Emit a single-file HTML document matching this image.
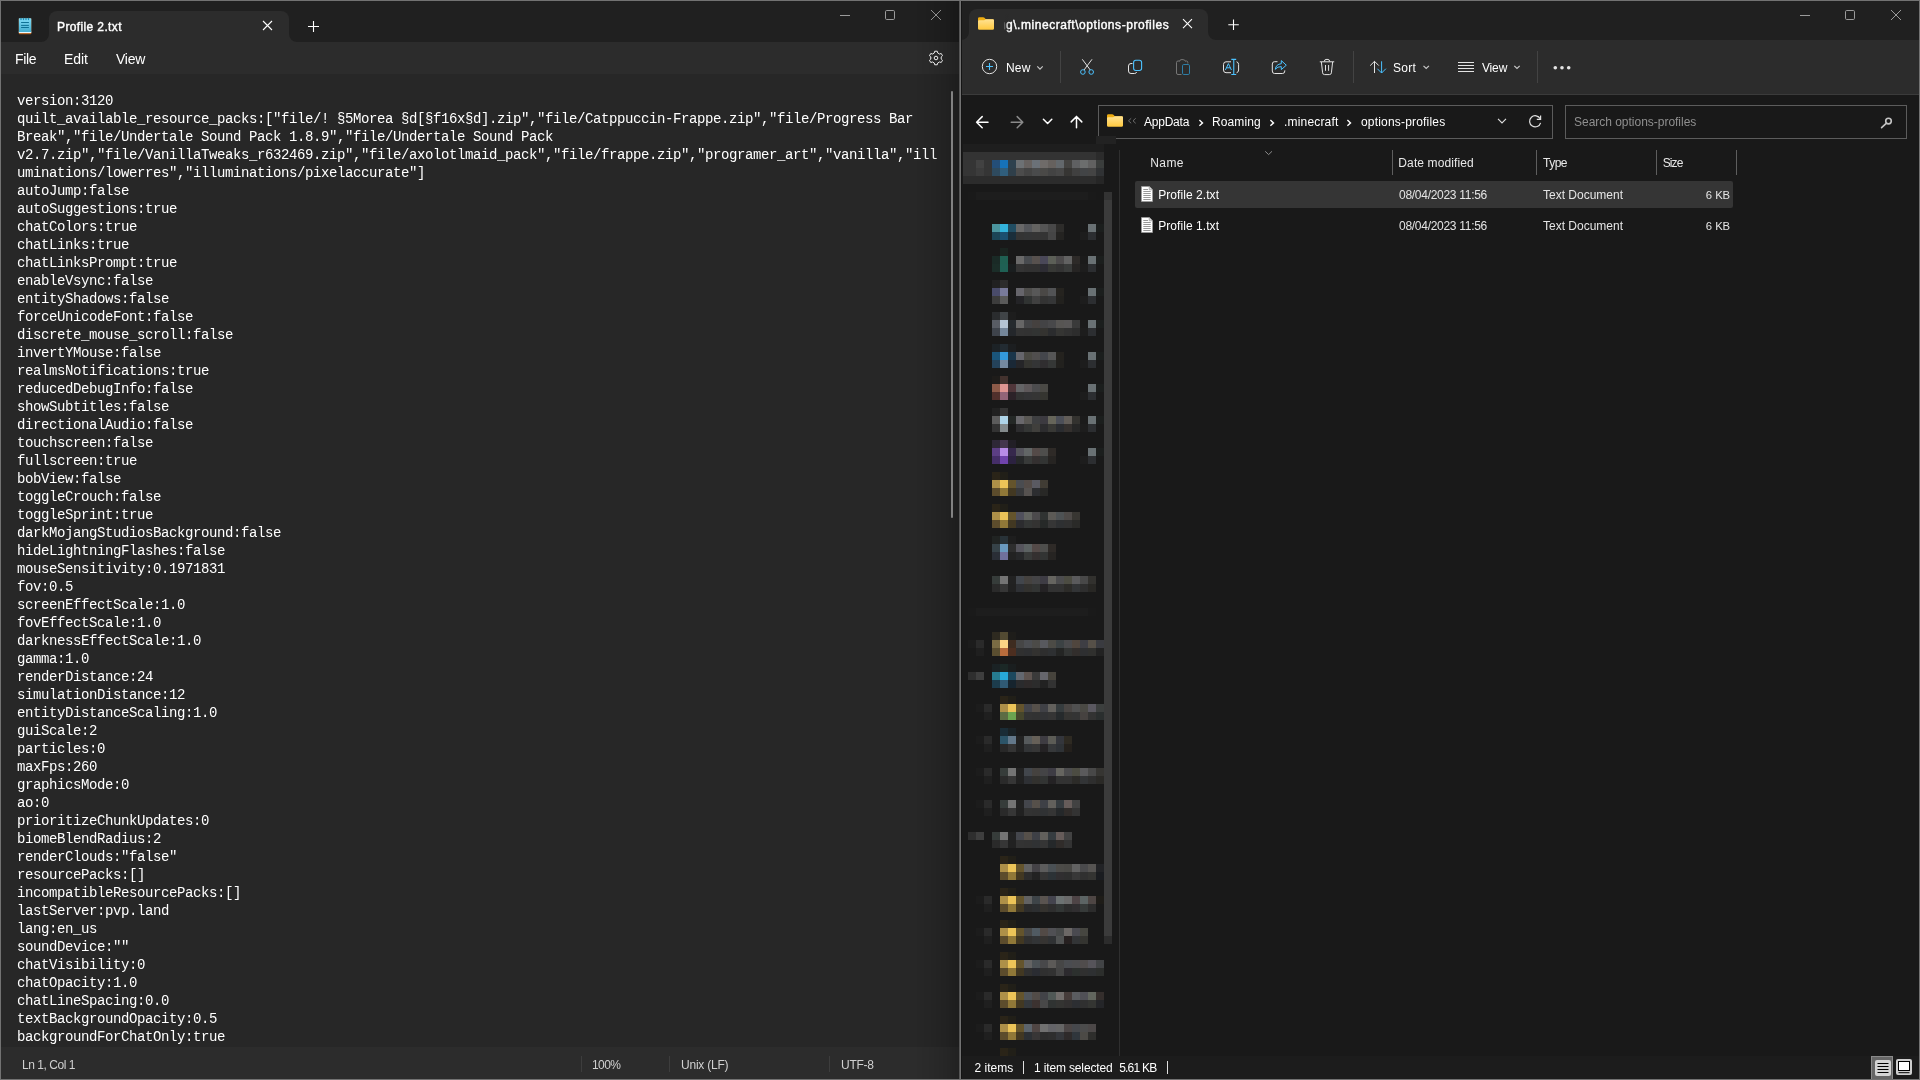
<!DOCTYPE html>
<html lang="en"><head><meta charset="utf-8"><title>Desktop</title>
<style>
html,body{margin:0;padding:0;background:#191919;}
body{width:1920px;height:1080px;position:relative;overflow:hidden;font-family:"Liberation Sans",sans-serif;color:#fff;}
.a{position:absolute;}
.t{position:absolute;white-space:pre;line-height:20px;height:20px;font-family:"Liberation Sans",sans-serif;}
.m{position:absolute;left:17px;white-space:pre;font-family:"Liberation Mono",monospace;font-size:14px;letter-spacing:-0.4014px;line-height:18px;height:18px;color:#fff;}
.g{will-change:transform;}
svg{position:absolute;overflow:visible;}
</style></head><body>
<div class="a" id="np" style="left:0;top:0;width:960px;height:1080px;background:#727272"></div>
<div class="a" style="left:1px;top:1px;width:958px;height:41px;background:#202020"></div>
<div class="a" style="left:1px;top:42px;width:958px;height:32px;background:#2c2c2c"></div>
<div class="a" style="left:1px;top:74px;width:958px;height:973px;background:#272727"></div>
<div class="a" style="left:1px;top:1047px;width:958px;height:32px;background:#2c2c2c"></div>
<div class="a" style="left:49px;top:11px;width:240px;height:31px;background:#2c2c2c;border-radius:8px 8px 0 0"></div>
<svg style="left:0;top:0" width="1920" height="1080"><path d="M41,42 A8,8 0 0 0 49,34 L49,42Z M297,42 A8,8 0 0 1 289,34 L289,42Z" fill="#2c2c2c"/></svg>
<svg style="left:0;top:0" width="1920" height="1080">
<defs><linearGradient id="npg" x1="0" y1="0" x2="0" y2="1"><stop offset="0" stop-color="#82ddf8"/><stop offset="1" stop-color="#45aed0"/></linearGradient></defs>
<rect x="18.8" y="18.2" width="12.5" height="16" rx="0.8" fill="#b45a16"/>
<rect x="18.8" y="31.4" width="12.5" height="1.7" fill="#eaf7fc"/>
<rect x="18.8" y="18.2" width="12.5" height="13.9" rx="0.6" fill="url(#npg)"/>
<path d="M21,18.5v1.1M23.5,18.5v1.1M26,18.5v1.1M28.5,18.5v1.1" stroke="#1d8cb4" stroke-width="1.3" stroke-linecap="round"/>
<path d="M21.1,22.5h7.8M21.1,25.4h7.8M21.1,27.5h7.8" stroke="#05688c" stroke-width="0.9"/>
</svg>
<span class="t g" style="left:56.50px;top:16.84px;font-size:12px;letter-spacing:0.375px;-webkit-text-stroke:0.4px #fff;">Profile 2.txt</span>
<svg style="left:0;top:0" width="1920" height="1080"><path d="M263,21 L272,30 M272,21 L263,30" stroke="#fff" stroke-width="1.1" fill="none"/><path d="M308,26.5 H319 M313.5,21 V32" stroke="#fff" stroke-width="1.1" fill="none"/><path d="M840,15.5 H850" stroke="#9b9b9b" stroke-width="1"/><rect x="885.5" y="10.5" width="9" height="9" rx="1.2" fill="none" stroke="#9b9b9b" stroke-width="1"/><path d="M931,10 L941,20 M941,10 L931,20" stroke="#9b9b9b" stroke-width="1" fill="none"/></svg>
<span class="t g" style="left:15.00px;top:49.15px;font-size:14px;letter-spacing:-0.333px;">File</span>
<span class="t g" style="left:63.60px;top:49.15px;font-size:14px;letter-spacing:-0.117px;">Edit</span>
<span class="t g" style="left:116.25px;top:49.15px;font-size:14px;letter-spacing:-0.267px;">View</span>
<svg class="a" style="left:0;top:0" width="1920" height="1080"><path d="M934.31,52.98 L934.71,51.22 L937.29,51.22 L937.69,52.98 L939.50,54.02 L941.22,53.49 L942.52,55.73 L941.20,56.95 L941.20,59.05 L942.52,60.27 L941.22,62.51 L939.50,61.98 L937.69,63.02 L937.29,64.78 L934.71,64.78 L934.31,63.02 L932.50,61.98 L930.78,62.51 L929.48,60.27 L930.80,59.05 L930.80,56.95 L929.48,55.73 L930.78,53.49 L932.50,54.02Z" fill="none" stroke="#fff" stroke-width="1" stroke-linejoin="round"/><circle cx="936" cy="58" r="1.8" fill="none" stroke="#fff" stroke-width="1"/></svg>
<div class="m" style="top:92px">version:3120</div>
<div class="m" style="top:110px">quilt_available_resource_packs:["file/! §5Morea §d[§f16x§d].zip","file/Catppuccin-Frappe.zip","file/Progress Bar</div>
<div class="m" style="top:128px">Break","file/Undertale Sound Pack 1.8.9","file/Undertale Sound Pack</div>
<div class="m" style="top:146px">v2.7.zip","file/VanillaTweaks_r632469.zip","file/axolotlmaid_pack","file/frappe.zip","programer_art","vanilla","ill</div>
<div class="m" style="top:164px">uminations/lowerres","illuminations/pixelaccurate"]</div>
<div class="m" style="top:182px">autoJump:false</div>
<div class="m" style="top:200px">autoSuggestions:true</div>
<div class="m" style="top:218px">chatColors:true</div>
<div class="m" style="top:236px">chatLinks:true</div>
<div class="m" style="top:254px">chatLinksPrompt:true</div>
<div class="m" style="top:272px">enableVsync:false</div>
<div class="m" style="top:290px">entityShadows:false</div>
<div class="m" style="top:308px">forceUnicodeFont:false</div>
<div class="m" style="top:326px">discrete_mouse_scroll:false</div>
<div class="m" style="top:344px">invertYMouse:false</div>
<div class="m" style="top:362px">realmsNotifications:true</div>
<div class="m" style="top:380px">reducedDebugInfo:false</div>
<div class="m" style="top:398px">showSubtitles:false</div>
<div class="m" style="top:416px">directionalAudio:false</div>
<div class="m" style="top:434px">touchscreen:false</div>
<div class="m" style="top:452px">fullscreen:true</div>
<div class="m" style="top:470px">bobView:false</div>
<div class="m" style="top:488px">toggleCrouch:false</div>
<div class="m" style="top:506px">toggleSprint:true</div>
<div class="m" style="top:524px">darkMojangStudiosBackground:false</div>
<div class="m" style="top:542px">hideLightningFlashes:false</div>
<div class="m" style="top:560px">mouseSensitivity:0.1971831</div>
<div class="m" style="top:578px">fov:0.5</div>
<div class="m" style="top:596px">screenEffectScale:1.0</div>
<div class="m" style="top:614px">fovEffectScale:1.0</div>
<div class="m" style="top:632px">darknessEffectScale:1.0</div>
<div class="m" style="top:650px">gamma:1.0</div>
<div class="m" style="top:668px">renderDistance:24</div>
<div class="m" style="top:686px">simulationDistance:12</div>
<div class="m" style="top:704px">entityDistanceScaling:1.0</div>
<div class="m" style="top:722px">guiScale:2</div>
<div class="m" style="top:740px">particles:0</div>
<div class="m" style="top:758px">maxFps:260</div>
<div class="m" style="top:776px">graphicsMode:0</div>
<div class="m" style="top:794px">ao:0</div>
<div class="m" style="top:812px">prioritizeChunkUpdates:0</div>
<div class="m" style="top:830px">biomeBlendRadius:2</div>
<div class="m" style="top:848px">renderClouds:"false"</div>
<div class="m" style="top:866px">resourcePacks:[]</div>
<div class="m" style="top:884px">incompatibleResourcePacks:[]</div>
<div class="m" style="top:902px">lastServer:pvp.land</div>
<div class="m" style="top:920px">lang:en_us</div>
<div class="m" style="top:938px">soundDevice:""</div>
<div class="m" style="top:956px">chatVisibility:0</div>
<div class="m" style="top:974px">chatOpacity:1.0</div>
<div class="m" style="top:992px">chatLineSpacing:0.0</div>
<div class="m" style="top:1010px">textBackgroundOpacity:0.5</div>
<div class="m" style="top:1028px">backgroundForChatOnly:true</div>
<div class="a" style="left:951px;top:91px;width:2px;height:427px;background:#9f9f9f;border-radius:1px"></div>
<span class="t g" style="left:21.50px;top:1054.59px;font-size:12px;color:#d0d0d0;letter-spacing:-0.450px;">Ln 1, Col 1</span>
<span class="t g" style="left:592.25px;top:1054.59px;font-size:12px;color:#d0d0d0;letter-spacing:-0.583px;">100%</span>
<span class="t g" style="left:680.50px;top:1054.59px;font-size:12px;color:#d0d0d0;letter-spacing:-0.219px;">Unix (LF)</span>
<span class="t g" style="left:840.50px;top:1054.59px;font-size:12px;color:#d0d0d0;letter-spacing:-0.250px;">UTF-8</span>
<div class="a" style="left:916px;top:1px;width:43px;height:1078px;background:linear-gradient(90deg,rgba(0,0,0,0) 0%,rgba(0,0,0,0.05) 35%,rgba(0,0,0,0.13) 70%,rgba(0,0,0,0.24) 100%)"></div>
<div class="a" style="left:959px;top:1px;width:1px;height:1078px;background:#555"></div>
<div class="a" style="left:581px;top:1056px;width:1px;height:16px;background:#3d3d3d"></div>
<div class="a" style="left:669px;top:1056px;width:1px;height:16px;background:#3d3d3d"></div>
<div class="a" style="left:829px;top:1056px;width:1px;height:16px;background:#3d3d3d"></div>
<div class="a" id="ex" style="left:960px;top:0;width:960px;height:1080px;background:#727272"></div>
<div class="a" style="left:961px;top:1px;width:958px;height:39px;background:#202020"></div>
<div class="a" style="left:961px;top:1px;width:1px;height:1078px;background:#141414;z-index:3"></div>
<div class="a" style="left:961px;top:40px;width:958px;height:54px;background:#2c2c2c"></div>
<div class="a" style="left:961px;top:94px;width:958px;height:1px;background:#3b3b3b"></div>
<div class="a" style="left:961px;top:95px;width:958px;height:984px;background:#191919"></div>
<div class="a" style="left:961px;top:1056px;width:958px;height:23px;background:#1c1c1c"></div>
<div class="a" style="left:969px;top:9px;width:239px;height:31px;background:#2c2c2c;border-radius:8px 8px 0 0"></div>
<svg style="left:0;top:0" width="1920" height="1080"><path d="M961,40 A8,8 0 0 0 969,32 L969,40Z M1216,40 A8,8 0 0 1 1208,32 L1208,40Z" fill="#2c2c2c"/></svg>
<svg style="left:978px;top:17px" width="16" height="13" viewBox="0 0 16 13"><defs><linearGradient id="fg1" x1="0" y1="0" x2="0" y2="1"><stop offset="0" stop-color="#ffe394"/><stop offset="1" stop-color="#ffc83d"/></linearGradient></defs><path d="M0,1.6 Q0,0.2 1.4,0.2 H5.2 Q6,0.2 6.5,0.8 L7.8,2.2 H14.6 Q16,2.2 16,3.6 V11 H0Z" fill="#efad10"/><path d="M0,4.6 Q0,3.3 1.3,3.3 H5.5 Q6.3,3.3 6.9,2.8 L7.8,2.2 H14.7 Q16,2.2 16,3.5 V11.4 Q16,12.8 14.6,12.8 H1.4 Q0,12.8 0,11.4Z" fill="url(#fg1)"/></svg>
<span class="t g" style="left:998.65px;top:14.59px;font-size:12px;letter-spacing:0.000px;-webkit-text-stroke:0.4px #fff;">n</span>
<span class="t g" style="left:1005.70px;top:14.59px;font-size:12px;letter-spacing:0.546px;-webkit-text-stroke:0.4px #fff;">g\.minecraft\options-profiles</span>
<div class="a" style="left:996px;top:14px;width:14px;height:20px;background:linear-gradient(90deg,#2c2c2c 55%,rgba(44,44,44,0.35) 70%,rgba(44,44,44,0) 100%)"></div>
<svg style="left:0;top:0" width="1920" height="1080"><path d="M1183,19.2 L1192,28.2 M1192,19.2 L1183,28.2" stroke="#fff" stroke-width="1.1" fill="none"/><path d="M1228.3,24.8 H1238.8 M1233.5,19.6 V30" stroke="#fff" stroke-width="1.1" fill="none"/><path d="M1800,15.5 H1810" stroke="#9b9b9b" stroke-width="1"/><rect x="1845.5" y="10.5" width="9" height="9" rx="1.2" fill="none" stroke="#9b9b9b" stroke-width="1"/><path d="M1891,10 L1901,20 M1901,10 L1891,20" stroke="#9b9b9b" stroke-width="1" fill="none"/><circle cx="989.5" cy="66.5" r="7.2" fill="none" stroke="#e4e4e4" stroke-width="1"/><path d="M986,66.5 H993 M989.5,63 V70" stroke="#4cc2ff" stroke-width="1.1" fill="none"/><path d="M1037.3,66.4 L1040,69.1 L1042.7,66.4" stroke="#c8c8c8" stroke-width="1.2" fill="none"/><path d="M1060.5,51 V83" stroke="#434343" stroke-width="1"/><path d="M1353.5,51 V83" stroke="#434343" stroke-width="1"/><path d="M1537.5,51 V83" stroke="#434343" stroke-width="1"/><path d="M1082.3,59.3 L1090.3,70 M1092,59.3 L1084,70" stroke="#e4e4e4" stroke-width="1" fill="none"/><circle cx="1082.9" cy="72" r="2.3" fill="none" stroke="#4cc2ff" stroke-width="1"/><circle cx="1091.2" cy="72" r="2.3" fill="none" stroke="#4cc2ff" stroke-width="1"/><path d="M1132.5,63.5 H1131 Q1128.5,63.5 1128.5,66 V71 Q1128.5,73.5 1131,73.5 H1134.5 Q1136.3,73.5 1136.6,72" stroke="#e4e4e4" stroke-width="1" fill="none"/><rect x="1133.6" y="60.3" width="8" height="10.2" rx="2.2" fill="none" stroke="#4cc2ff" stroke-width="1.1"/><path d="M1181.5,74.5 H1178 Q1176.5,74.5 1176.5,73 V62.5 Q1176.5,61 1178,61 H1179.5 M1185.5,61 H1186.5 Q1187.8,61 1187.8,62.5 V63.5" stroke="#767676" stroke-width="1" fill="none"/><path d="M1179.5,61.5 Q1179.5,59.5 1182,59.5 Q1185.5,59.5 1185.5,61.5" stroke="#767676" stroke-width="1" fill="none"/><rect x="1182.5" y="64.5" width="7" height="10" rx="1.3" fill="none" stroke="#2e7ea6" stroke-width="1"/><path d="M1231,61.8 H1226 Q1223.5,61.8 1223.5,64.5 V70 Q1223.5,72.7 1226,72.7 H1231 M1236.5,61.8 H1236.7 Q1238.6,62.3 1238.6,64.5 V70 Q1238.6,72.2 1236.7,72.7 H1236.5" stroke="#e4e4e4" stroke-width="1" fill="none"/><path d="M1231.3,59.4 H1236.2 M1231.3,74.5 H1236.2 M1233.75,59.4 V74.5" stroke="#4cc2ff" stroke-width="1.1" fill="none"/><path d="M1225.4,70 L1228.4,63.6 L1231.4,70 M1226.5,67.8 H1230.3" stroke="#4cc2ff" stroke-width="1" fill="none"/><path d="M1277.5,61.7 H1274.5 Q1272.3,61.7 1272.3,64 V71 Q1272.3,73.5 1274.5,73.5 H1282.5 Q1284.8,73.5 1284.8,71 V70.4" stroke="#e4e4e4" stroke-width="1" fill="none"/><path d="M1275.3,69.3 Q1276,64.2 1281.3,63.7 V60.6 L1286.3,65.2 L1281.3,69.6 V66.6 Q1277.6,66.4 1275.3,69.3Z" stroke="#4cc2ff" stroke-width="1" fill="none" stroke-linejoin="round"/><path d="M1319.8,61.8 H1334.2 M1324.2,61.5 Q1324.2,59.3 1327,59.3 Q1329.8,59.3 1329.8,61.5 M1321.4,62 L1322.6,72.8 Q1322.8,74.6 1324.6,74.6 H1329.4 Q1331.2,74.6 1331.4,72.8 L1332.6,62 M1325.5,65 V70.8 M1328.6,65 V70.8" stroke="#e4e4e4" stroke-width="1" fill="none"/><path d="M1374.5,61.3 V73 M1370.2,65.6 L1374.5,61.3 L1378.8,65.6" stroke="#e4e4e4" stroke-width="1" fill="none"/><path d="M1381.6,61.3 V73 M1377.3,68.7 L1381.6,73 L1385.9,68.7" stroke="#4cc2ff" stroke-width="1" fill="none"/><path d="M1423.5,65.8 L1426.2,68.5 L1428.9,65.8" stroke="#c8c8c8" stroke-width="1.2" fill="none"/><path d="M1458,62.5 H1474 M1458,65.5 H1474 M1458,68.5 H1474 M1458,71.5 H1474" stroke="#e4e4e4" stroke-width="1" fill="none"/><path d="M1514.3,65.8 L1517,68.5 L1519.7,65.8" stroke="#c8c8c8" stroke-width="1.2" fill="none"/><circle cx="1555.3" cy="67.8" r="1.8" fill="#e4e4e4"/><circle cx="1562" cy="67.8" r="1.8" fill="#e4e4e4"/><circle cx="1568.7" cy="67.8" r="1.8" fill="#e4e4e4"/><path d="M976.6,122.2 H988 M982.2,116.6 L976.6,122.2 L982.2,127.8" stroke="#fff" stroke-width="1.5" fill="none" stroke-linejoin="round" stroke-linecap="round"/><path d="M1011.2,122.2 H1022.8 M1017.2,116.6 L1022.8,122.2 L1017.2,127.8" stroke="#8a8a8a" stroke-width="1.5" fill="none" stroke-linejoin="round" stroke-linecap="round"/><path d="M1043.4,119.2 L1047.6,123.5 L1051.8,119.2" stroke="#fff" stroke-width="1.5" fill="none" stroke-linejoin="round" stroke-linecap="round"/><path d="M1076.5,116.5 V127.8 M1071.2,121.9 L1076.5,116.5 L1081.8,121.9" stroke="#fff" stroke-width="1.5" fill="none" stroke-linejoin="round" stroke-linecap="round"/><path d="M1128.3,118.3 L1131,120.8 L1128.3,123.3 M1132.8,118.3 L1135.5,120.8 L1132.8,123.3" stroke="#777" stroke-width="0.9" fill="none" transform="translate(2264,0) scale(-1,1)"/><path d="M1199.4,120.1 L1202.5,122.9 L1199.4,125.7" stroke="#fff" stroke-width="1.4" fill="none"/><path d="M1270.4,120.1 L1273.5,122.9 L1270.4,125.7" stroke="#fff" stroke-width="1.4" fill="none"/><path d="M1347.4,120.1 L1350.5,122.9 L1347.4,125.7" stroke="#fff" stroke-width="1.4" fill="none"/><path d="M1498,118.8 L1502,122.9 L1506,118.8" stroke="#e0e0e0" stroke-width="1.1" fill="none"/><path d="M1540.2,118.8 A5.6,5.6 0 1 0 1540.6,122.8" stroke="#e0e0e0" stroke-width="1.2" fill="none"/><path d="M1540.6,115.6 V119.4 H1536.8" stroke="#e0e0e0" stroke-width="1.2" fill="none"/><circle cx="1888.5" cy="121.1" r="2.8" fill="none" stroke="#c4c4c4" stroke-width="1.6"/><path d="M1886.2,123.4 L1881.6,127.6" stroke="#c4c4c4" stroke-width="1.7" stroke-linecap="round"/><path d="M1265.2,151.3 L1268.6,154.6 L1272,151.3" stroke="#9a9a9a" stroke-width="0.9" fill="none"/></svg>
<span class="t g" style="left:1005.70px;top:57.54px;font-size:12px;letter-spacing:0.150px;">New</span>
<span class="t g" style="left:1393.25px;top:57.74px;font-size:12px;letter-spacing:0.250px;">Sort</span>
<span class="t g" style="left:1482.30px;top:57.74px;font-size:12px;letter-spacing:-0.167px;">View</span>
<div class="a" style="left:1098px;top:105px;width:453px;height:32px;border:1px solid #5c5c5c"></div>
<div class="a" style="left:1565px;top:105px;width:340px;height:32px;border:1px solid #5c5c5c"></div>
<svg style="left:1107px;top:114px" width="16" height="13" viewBox="0 0 16 13"><defs><linearGradient id="fg2" x1="0" y1="0" x2="0" y2="1"><stop offset="0" stop-color="#ffe394"/><stop offset="1" stop-color="#ffc83d"/></linearGradient></defs><path d="M0,1.6 Q0,0.2 1.4,0.2 H5.2 Q6,0.2 6.5,0.8 L7.8,2.2 H14.6 Q16,2.2 16,3.6 V11 H0Z" fill="#efad10"/><path d="M0,4.6 Q0,3.3 1.3,3.3 H5.5 Q6.3,3.3 6.9,2.8 L7.8,2.2 H14.7 Q16,2.2 16,3.5 V11.4 Q16,12.8 14.6,12.8 H1.4 Q0,12.8 0,11.4Z" fill="url(#fg2)"/></svg>
<span class="t g" style="left:1144.20px;top:111.64px;font-size:12px;letter-spacing:-0.225px;">AppData</span>
<span class="t g" style="left:1212.30px;top:111.64px;font-size:12px;letter-spacing:0.100px;">Roaming</span>
<span class="t g" style="left:1283.60px;top:111.64px;font-size:12px;letter-spacing:0.183px;">.minecraft</span>
<span class="t g" style="left:1361.20px;top:111.64px;font-size:12px;letter-spacing:0.187px;">options-profiles</span>
<span class="t g" style="left:1573.70px;top:111.64px;font-size:12px;color:#8f8f8f;letter-spacing:-0.020px;">Search options-profiles</span>
<div class="a" style="left:1119px;top:150px;width:1px;height:906px;background:#2f2f2f"></div>
<span class="t" style="left:1150.25px;top:152.64px;font-size:12px;color:#e8e8e8;letter-spacing:0.417px;">Name</span>
<span class="t" style="left:1398.30px;top:152.64px;font-size:12px;color:#e8e8e8;letter-spacing:0.121px;">Date modified</span>
<span class="t" style="left:1543.00px;top:152.64px;font-size:12px;color:#e8e8e8;letter-spacing:-0.500px;">Type</span>
<span class="t" style="left:1662.75px;top:152.64px;font-size:12px;color:#e8e8e8;letter-spacing:-0.917px;">Size</span>
<div class="a" style="left:1392px;top:150px;width:1px;height:25px;background:#5e5e5e"></div>
<div class="a" style="left:1536px;top:150px;width:1px;height:25px;background:#5e5e5e"></div>
<div class="a" style="left:1656px;top:150px;width:1px;height:25px;background:#5e5e5e"></div>
<div class="a" style="left:1736px;top:150px;width:1px;height:25px;background:#5e5e5e"></div>
<div class="a" style="left:1135px;top:181px;width:598px;height:27px;background:#353535;border-radius:2px"></div>
<svg style="left:1141px;top:186px" width="12" height="16" viewBox="0 0 12 16"><path d="M0.5,0.5 H8.2 L11.5,3.8 V15.5 H0.5Z" fill="#fff" stroke="#9a9a9a" stroke-width="0.8"/><path d="M8.2,0.5 V3.8 H11.5" fill="#d8d8d8" stroke="#9a9a9a" stroke-width="0.7"/><path d="M2.3,3.5H7M2.3,5.5H9.7M2.3,7.5H9.7M2.3,9.5H9.7M2.3,11.5H9.7M2.3,13.5H9.7" stroke="#8c8c8c" stroke-width="0.9"/></svg>
<span class="t" style="left:1158.20px;top:184.59px;font-size:12px;letter-spacing:0.067px;">Profile 2.txt</span>
<span class="t" style="left:1399.05px;top:184.59px;font-size:12px;color:#e4e4e4;letter-spacing:-0.287px;">08/04/2023 11:56</span>
<span class="t" style="left:1543.00px;top:184.59px;font-size:12px;color:#e4e4e4;letter-spacing:0.000px;">Text Document</span>
<span class="t" style="left:1705.75px;top:184.83px;font-size:11.3px;color:#e4e4e4;letter-spacing:-0.333px;word-spacing:0.8px;">6 KB</span>
<svg style="left:1141px;top:217px" width="12" height="16" viewBox="0 0 12 16"><path d="M0.5,0.5 H8.2 L11.5,3.8 V15.5 H0.5Z" fill="#fff" stroke="#9a9a9a" stroke-width="0.8"/><path d="M8.2,0.5 V3.8 H11.5" fill="#d8d8d8" stroke="#9a9a9a" stroke-width="0.7"/><path d="M2.3,3.5H7M2.3,5.5H9.7M2.3,7.5H9.7M2.3,9.5H9.7M2.3,11.5H9.7M2.3,13.5H9.7" stroke="#8c8c8c" stroke-width="0.9"/></svg>
<span class="t" style="left:1158.20px;top:215.59px;font-size:12px;letter-spacing:0.067px;">Profile 1.txt</span>
<span class="t" style="left:1399.05px;top:215.59px;font-size:12px;color:#e4e4e4;letter-spacing:-0.287px;">08/04/2023 11:56</span>
<span class="t" style="left:1543.00px;top:215.59px;font-size:12px;color:#e4e4e4;letter-spacing:0.000px;">Text Document</span>
<span class="t" style="left:1705.75px;top:215.83px;font-size:11.3px;color:#e4e4e4;letter-spacing:-0.333px;word-spacing:0.8px;">6 KB</span>
<span class="t" style="left:974.50px;top:1057.54px;font-size:12px;letter-spacing:0.000px;">2 items</span>
<span class="t" style="left:1033.95px;top:1057.54px;font-size:12px;letter-spacing:-0.139px;">1 item selected</span>
<span class="t" style="left:1119.20px;top:1057.54px;font-size:12px;letter-spacing:-0.792px;">5.61 KB</span>
<div class="a" style="left:1023px;top:1061px;width:1px;height:13px;background:#e0e0e0"></div>
<div class="a" style="left:1167px;top:1061px;width:1px;height:13px;background:#e0e0e0"></div>
<div class="a" style="left:1871px;top:1056px;width:20px;height:22px;background:#666;border:1px solid #8a8a8a;border-bottom:0"></div>
<svg style="left:1875px;top:1060px" width="16" height="16" viewBox="0 0 16 16"><rect x="0" y="0" width="16" height="16" rx="2" fill="#d4d4d4"/><path d="M2.5,3.5H13.5M2.5,6.5H13.5M2.5,9.5H13.5M2.5,12.5H13.5" stroke="#000" stroke-width="1"/></svg>
<svg style="left:1896px;top:1059px" width="16" height="16" viewBox="0 0 16 16"><rect x="0" y="0" width="16" height="16" rx="2" fill="#cfcfcf"/><rect x="2.5" y="2.5" width="11" height="9" fill="#fff" stroke="#000" stroke-width="1"/><path d="M2.5,13.7H13.5" stroke="#000" stroke-width="1"/></svg>
<svg id="sb" style="left:0;top:0" width="1920" height="1080" shape-rendering="crispEdges"><rect x="963" y="144" width="133" height="8" fill="#1e1e1e"/><rect x="1096" y="136" width="20" height="8" fill="#222"/><rect x="1096" y="144" width="8" height="8" fill="#1e1e1e"/><rect x="963" y="152" width="133" height="8" fill="#333"/><rect x="1096" y="152" width="8" height="8" fill="#2b2b2b"/><rect x="963" y="160" width="141" height="16" fill="#353535"/><rect x="963" y="176" width="133" height="8" fill="#2c2c2c"/><rect x="1096" y="176" width="8" height="8" fill="#262626"/><rect x="1104" y="192" width="8" height="8" fill="#333"/><rect x="1104" y="200" width="8" height="736" fill="#3b3b3b"/><rect x="1104" y="936" width="8" height="8" fill="#2c2c2c"/><rect x="976" y="160" width="8" height="8" fill="#424242"/><rect x="992" y="160" width="8" height="8" fill="#244e78"/><rect x="1000" y="160" width="8" height="8" fill="#1672b8"/><rect x="1008" y="160" width="8" height="8" fill="#2e414e"/><rect x="1016" y="160" width="8" height="8" fill="#6d7174"/><rect x="1024" y="160" width="8" height="8" fill="#676260"/><rect x="1032" y="160" width="8" height="8" fill="#6b7178"/><rect x="1040" y="160" width="8" height="8" fill="#6f6b69"/><rect x="1048" y="160" width="8" height="8" fill="#66615e"/><rect x="1056" y="160" width="8" height="8" fill="#63686c"/><rect x="1064" y="160" width="8" height="8" fill="#444341"/><rect x="1072" y="160" width="8" height="8" fill="#5f6062"/><rect x="1080" y="160" width="8" height="8" fill="#6c6e6e"/><rect x="1088" y="160" width="8" height="8" fill="#616161"/><rect x="1096" y="160" width="8" height="8" fill="#3a3d3c"/><rect x="976" y="168" width="8" height="8" fill="#3c3c3c"/><rect x="992" y="168" width="8" height="8" fill="#2e4a5e"/><rect x="1000" y="168" width="8" height="8" fill="#305e7c"/><rect x="1008" y="168" width="8" height="8" fill="#2f3f4a"/><rect x="1016" y="168" width="8" height="8" fill="#4c4c4c"/><rect x="1024" y="168" width="8" height="8" fill="#444444"/><rect x="1032" y="168" width="8" height="8" fill="#4a4b4c"/><rect x="1040" y="168" width="8" height="8" fill="#4a4947"/><rect x="1048" y="168" width="8" height="8" fill="#434343"/><rect x="1056" y="168" width="8" height="8" fill="#474747"/><rect x="1064" y="168" width="8" height="8" fill="#363533"/><rect x="1072" y="168" width="8" height="8" fill="#404040"/><rect x="1080" y="168" width="8" height="8" fill="#424446"/><rect x="1088" y="168" width="8" height="8" fill="#444444"/><rect x="1096" y="168" width="8" height="8" fill="#303234"/><rect x="968" y="192" width="8" height="8" fill="#1a1a1a"/><rect x="976" y="192" width="112" height="8" fill="#1d1d1d"/><rect x="1088" y="192" width="8" height="8" fill="#1a1a1a"/><rect x="992" y="224" width="8" height="8" fill="#4b959e"/><rect x="1000" y="224" width="8" height="8" fill="#33b3dc"/><rect x="1008" y="224" width="8" height="8" fill="#214d62"/><rect x="1016" y="224" width="8" height="8" fill="#686868"/><rect x="1024" y="224" width="8" height="8" fill="#55575b"/><rect x="1032" y="224" width="8" height="8" fill="#646361"/><rect x="1040" y="224" width="8" height="8" fill="#555555"/><rect x="1048" y="224" width="8" height="8" fill="#484848"/><rect x="1056" y="224" width="8" height="8" fill="#2d2c2a"/><rect x="1088" y="224" width="8" height="8" fill="#697174"/><rect x="1096" y="224" width="8" height="8" fill="#1b1e1d"/><rect x="992" y="232" width="8" height="8" fill="#1c4556"/><rect x="1000" y="232" width="8" height="8" fill="#1b4f70"/><rect x="1008" y="232" width="8" height="8" fill="#1a2e3b"/><rect x="1016" y="232" width="8" height="8" fill="#343434"/><rect x="1024" y="232" width="8" height="8" fill="#343536"/><rect x="1032" y="232" width="8" height="8" fill="#353535"/><rect x="1040" y="232" width="8" height="8" fill="#343434"/><rect x="1048" y="232" width="8" height="8" fill="#454545"/><rect x="1056" y="232" width="8" height="8" fill="#242321"/><rect x="1080" y="232" width="8" height="8" fill="#1d1d1d"/><rect x="1088" y="232" width="8" height="8" fill="#2c2e31"/><rect x="1000" y="248" width="8" height="8" fill="#1a2420"/><rect x="992" y="256" width="8" height="8" fill="#1a2a26"/><rect x="1000" y="256" width="8" height="8" fill="#1f6052"/><rect x="1016" y="256" width="8" height="8" fill="#696969"/><rect x="1024" y="256" width="8" height="8" fill="#484b4f"/><rect x="1032" y="256" width="8" height="8" fill="#57514e"/><rect x="1040" y="256" width="8" height="8" fill="#4a4858"/><rect x="1048" y="256" width="8" height="8" fill="#5c5f57"/><rect x="1056" y="256" width="8" height="8" fill="#4d4b4c"/><rect x="1064" y="256" width="8" height="8" fill="#626262"/><rect x="1072" y="256" width="8" height="8" fill="#2d2a28"/><rect x="1080" y="256" width="8" height="8" fill="#1b1b1b"/><rect x="1088" y="256" width="8" height="8" fill="#697174"/><rect x="1096" y="256" width="8" height="8" fill="#1b1e1d"/><rect x="992" y="264" width="8" height="8" fill="#1b2d28"/><rect x="1000" y="264" width="8" height="8" fill="#1f6054"/><rect x="1008" y="264" width="8" height="8" fill="#1a1e1f"/><rect x="1016" y="264" width="8" height="8" fill="#343434"/><rect x="1024" y="264" width="16" height="8" fill="#313131"/><rect x="1040" y="264" width="8" height="8" fill="#2d2c33"/><rect x="1048" y="264" width="8" height="8" fill="#373835"/><rect x="1056" y="264" width="8" height="8" fill="#333333"/><rect x="1064" y="264" width="8" height="8" fill="#393b3a"/><rect x="1072" y="264" width="8" height="8" fill="#262423"/><rect x="1080" y="264" width="8" height="8" fill="#1d1d1d"/><rect x="1088" y="264" width="8" height="8" fill="#2c2e31"/><rect x="992" y="280" width="8" height="8" fill="#212121"/><rect x="1000" y="280" width="8" height="8" fill="#2c2c2c"/><rect x="992" y="288" width="8" height="8" fill="#494b6a"/><rect x="1000" y="288" width="8" height="8" fill="#787a9a"/><rect x="1016" y="288" width="8" height="8" fill="#66656b"/><rect x="1024" y="288" width="8" height="8" fill="#4f4e4c"/><rect x="1032" y="288" width="8" height="8" fill="#585858"/><rect x="1040" y="288" width="8" height="8" fill="#4a4846"/><rect x="1048" y="288" width="8" height="8" fill="#525355"/><rect x="1056" y="288" width="8" height="8" fill="#25231f"/><rect x="1088" y="288" width="8" height="8" fill="#697174"/><rect x="1096" y="288" width="8" height="8" fill="#1b1e1d"/><rect x="992" y="296" width="8" height="8" fill="#3c3c3c"/><rect x="1000" y="296" width="8" height="8" fill="#5a5a5a"/><rect x="1016" y="296" width="8" height="8" fill="#232326"/><rect x="1024" y="296" width="8" height="8" fill="#303332"/><rect x="1032" y="296" width="8" height="8" fill="#404040"/><rect x="1040" y="296" width="8" height="8" fill="#333333"/><rect x="1048" y="296" width="8" height="8" fill="#353637"/><rect x="1056" y="296" width="8" height="8" fill="#22211e"/><rect x="1080" y="296" width="8" height="8" fill="#1d1d1d"/><rect x="1088" y="296" width="8" height="8" fill="#2c2e31"/><rect x="992" y="312" width="8" height="8" fill="#2a2c2e"/><rect x="1000" y="312" width="8" height="8" fill="#404447"/><rect x="1008" y="312" width="8" height="8" fill="#1d1d1d"/><rect x="992" y="320" width="8" height="8" fill="#585c64"/><rect x="1000" y="320" width="8" height="8" fill="#b4c4d4"/><rect x="1008" y="320" width="8" height="8" fill="#252a2e"/><rect x="1016" y="320" width="8" height="8" fill="#666666"/><rect x="1024" y="320" width="8" height="8" fill="#434446"/><rect x="1032" y="320" width="8" height="8" fill="#45413f"/><rect x="1040" y="320" width="8" height="8" fill="#434345"/><rect x="1048" y="320" width="8" height="8" fill="#48484a"/><rect x="1056" y="320" width="8" height="8" fill="#575553"/><rect x="1064" y="320" width="8" height="8" fill="#585656"/><rect x="1072" y="320" width="8" height="8" fill="#3a3a3a"/><rect x="1080" y="320" width="8" height="8" fill="#1b1b1b"/><rect x="1088" y="320" width="8" height="8" fill="#697174"/><rect x="1096" y="320" width="8" height="8" fill="#1b1e1d"/><rect x="992" y="328" width="8" height="8" fill="#3e434b"/><rect x="1000" y="328" width="8" height="8" fill="#74869a"/><rect x="1008" y="328" width="8" height="8" fill="#24272b"/><rect x="1016" y="328" width="8" height="8" fill="#333333"/><rect x="1024" y="328" width="8" height="8" fill="#323232"/><rect x="1032" y="328" width="8" height="8" fill="#323433"/><rect x="1040" y="328" width="8" height="8" fill="#343330"/><rect x="1048" y="328" width="8" height="8" fill="#2b2c2e"/><rect x="1056" y="328" width="8" height="8" fill="#353533"/><rect x="1064" y="328" width="8" height="8" fill="#313131"/><rect x="1072" y="328" width="8" height="8" fill="#2d2d2d"/><rect x="1080" y="328" width="8" height="8" fill="#1d1d1d"/><rect x="1088" y="328" width="8" height="8" fill="#2c2e31"/><rect x="992" y="344" width="8" height="8" fill="#1c2226"/><rect x="1000" y="344" width="8" height="8" fill="#222b32"/><rect x="1008" y="344" width="8" height="8" fill="#1c1e20"/><rect x="992" y="352" width="8" height="8" fill="#1a557a"/><rect x="1000" y="352" width="8" height="8" fill="#3399dc"/><rect x="1008" y="352" width="8" height="8" fill="#1a354a"/><rect x="1016" y="352" width="8" height="8" fill="#66666c"/><rect x="1024" y="352" width="8" height="8" fill="#4b4a44"/><rect x="1032" y="352" width="8" height="8" fill="#504e4e"/><rect x="1040" y="352" width="8" height="8" fill="#44464c"/><rect x="1048" y="352" width="8" height="8" fill="#565656"/><rect x="1056" y="352" width="8" height="8" fill="#24221e"/><rect x="1088" y="352" width="8" height="8" fill="#697174"/><rect x="1096" y="352" width="8" height="8" fill="#1b1e1d"/><rect x="992" y="360" width="8" height="8" fill="#24425a"/><rect x="1000" y="360" width="8" height="8" fill="#7489a0"/><rect x="1008" y="360" width="8" height="8" fill="#1a2836"/><rect x="1016" y="360" width="8" height="8" fill="#252528"/><rect x="1024" y="360" width="8" height="8" fill="#343430"/><rect x="1032" y="360" width="8" height="8" fill="#343536"/><rect x="1040" y="360" width="8" height="8" fill="#302e30"/><rect x="1048" y="360" width="8" height="8" fill="#353736"/><rect x="1056" y="360" width="8" height="8" fill="#22211e"/><rect x="1080" y="360" width="8" height="8" fill="#1d1d1d"/><rect x="1088" y="360" width="8" height="8" fill="#2c2e31"/><rect x="992" y="376" width="8" height="8" fill="#1e1c1a"/><rect x="1000" y="376" width="8" height="8" fill="#43322e"/><rect x="992" y="384" width="8" height="8" fill="#8c5a48"/><rect x="1000" y="384" width="8" height="8" fill="#df9592"/><rect x="1008" y="384" width="8" height="8" fill="#50363a"/><rect x="1016" y="384" width="8" height="8" fill="#646466"/><rect x="1024" y="384" width="8" height="8" fill="#5e585a"/><rect x="1032" y="384" width="8" height="8" fill="#4c4c4e"/><rect x="1040" y="384" width="8" height="8" fill="#4a4945"/><rect x="1088" y="384" width="8" height="8" fill="#697174"/><rect x="1096" y="384" width="8" height="8" fill="#1b1e1d"/><rect x="992" y="392" width="8" height="8" fill="#50302c"/><rect x="1000" y="392" width="8" height="8" fill="#926478"/><rect x="1008" y="392" width="8" height="8" fill="#2c2228"/><rect x="1016" y="392" width="8" height="8" fill="#323232"/><rect x="1024" y="392" width="8" height="8" fill="#343436"/><rect x="1032" y="392" width="8" height="8" fill="#353535"/><rect x="1040" y="392" width="8" height="8" fill="#353530"/><rect x="1080" y="392" width="8" height="8" fill="#1d1d1d"/><rect x="1088" y="392" width="8" height="8" fill="#2c2e31"/><rect x="992" y="408" width="8" height="8" fill="#212121"/><rect x="1000" y="408" width="8" height="8" fill="#343434"/><rect x="992" y="416" width="8" height="8" fill="#5c5c5c"/><rect x="1000" y="416" width="8" height="8" fill="#aed4e8"/><rect x="1008" y="416" width="8" height="8" fill="#242826"/><rect x="1016" y="416" width="8" height="8" fill="#69686c"/><rect x="1024" y="416" width="8" height="8" fill="#5a5854"/><rect x="1032" y="416" width="8" height="8" fill="#3e3f41"/><rect x="1040" y="416" width="8" height="8" fill="#3c3a40"/><rect x="1048" y="416" width="8" height="8" fill="#66655a"/><rect x="1056" y="416" width="8" height="8" fill="#4c4f58"/><rect x="1064" y="416" width="8" height="8" fill="#625d58"/><rect x="1072" y="416" width="8" height="8" fill="#33322f"/><rect x="1080" y="416" width="8" height="8" fill="#1b1b1b"/><rect x="1088" y="416" width="8" height="8" fill="#697174"/><rect x="1096" y="416" width="8" height="8" fill="#1b1e1d"/><rect x="992" y="424" width="8" height="8" fill="#333333"/><rect x="1000" y="424" width="8" height="8" fill="#838a8c"/><rect x="1016" y="424" width="8" height="8" fill="#2c2c2e"/><rect x="1024" y="424" width="8" height="8" fill="#343635"/><rect x="1032" y="424" width="8" height="8" fill="#403f3c"/><rect x="1040" y="424" width="8" height="8" fill="#2c2c2e"/><rect x="1048" y="424" width="8" height="8" fill="#383835"/><rect x="1056" y="424" width="8" height="8" fill="#2a2c30"/><rect x="1064" y="424" width="8" height="8" fill="#34302e"/><rect x="1072" y="424" width="8" height="8" fill="#262626"/><rect x="1080" y="424" width="8" height="8" fill="#1d1d1d"/><rect x="1088" y="424" width="8" height="8" fill="#2c2e31"/><rect x="992" y="440" width="8" height="8" fill="#2e2836"/><rect x="1000" y="440" width="8" height="8" fill="#44364e"/><rect x="1008" y="440" width="8" height="8" fill="#221f26"/><rect x="992" y="448" width="8" height="8" fill="#5c3e84"/><rect x="1000" y="448" width="8" height="8" fill="#b88ce8"/><rect x="1008" y="448" width="8" height="8" fill="#36284c"/><rect x="1016" y="448" width="8" height="8" fill="#55545c"/><rect x="1024" y="448" width="8" height="8" fill="#626666"/><rect x="1032" y="448" width="8" height="8" fill="#544a48"/><rect x="1040" y="448" width="8" height="8" fill="#4e4e4c"/><rect x="1048" y="448" width="8" height="8" fill="#2e2a27"/><rect x="1088" y="448" width="8" height="8" fill="#697174"/><rect x="1096" y="448" width="8" height="8" fill="#1b1e1d"/><rect x="992" y="456" width="8" height="8" fill="#452e68"/><rect x="1000" y="456" width="8" height="8" fill="#7043ac"/><rect x="1008" y="456" width="8" height="8" fill="#2c2240"/><rect x="1016" y="456" width="8" height="8" fill="#262829"/><rect x="1024" y="456" width="8" height="8" fill="#383a39"/><rect x="1032" y="456" width="8" height="8" fill="#343030"/><rect x="1040" y="456" width="8" height="8" fill="#323433"/><rect x="1048" y="456" width="8" height="8" fill="#262422"/><rect x="1080" y="456" width="8" height="8" fill="#1d1d1d"/><rect x="1088" y="456" width="8" height="8" fill="#2c2e31"/><rect x="992" y="472" width="8" height="8" fill="#2a2418"/><rect x="1000" y="472" width="8" height="8" fill="#211f18"/><rect x="992" y="480" width="8" height="8" fill="#ae9048"/><rect x="1000" y="480" width="8" height="8" fill="#ecc458"/><rect x="1008" y="480" width="8" height="8" fill="#64542c"/><rect x="1016" y="480" width="8" height="8" fill="#4a4c50"/><rect x="1024" y="480" width="8" height="8" fill="#544c48"/><rect x="1032" y="480" width="8" height="8" fill="#5a5a62"/><rect x="1040" y="480" width="8" height="8" fill="#403c34"/><rect x="992" y="488" width="8" height="8" fill="#5c4c2c"/><rect x="1000" y="488" width="8" height="8" fill="#907838"/><rect x="1008" y="488" width="8" height="8" fill="#423822"/><rect x="1016" y="488" width="8" height="8" fill="#38393b"/><rect x="1024" y="488" width="8" height="8" fill="#565250"/><rect x="1032" y="488" width="8" height="8" fill="#2c2d30"/><rect x="1040" y="488" width="8" height="8" fill="#282826"/><rect x="992" y="504" width="8" height="8" fill="#2a2418"/><rect x="1000" y="504" width="8" height="8" fill="#211f18"/><rect x="992" y="512" width="8" height="8" fill="#ae9048"/><rect x="1000" y="512" width="8" height="8" fill="#ecc458"/><rect x="1008" y="512" width="8" height="8" fill="#64542c"/><rect x="1016" y="512" width="8" height="8" fill="#50505c"/><rect x="1024" y="512" width="8" height="8" fill="#626460"/><rect x="1032" y="512" width="8" height="8" fill="#4c4a4c"/><rect x="1040" y="512" width="8" height="8" fill="#303332"/><rect x="1048" y="512" width="8" height="8" fill="#5c5a56"/><rect x="1056" y="512" width="8" height="8" fill="#4e5254"/><rect x="1064" y="512" width="8" height="8" fill="#4e4a48"/><rect x="1072" y="512" width="8" height="8" fill="#383632"/><rect x="992" y="520" width="8" height="8" fill="#5c4c2c"/><rect x="1000" y="520" width="8" height="8" fill="#907838"/><rect x="1008" y="520" width="8" height="8" fill="#423822"/><rect x="1016" y="520" width="8" height="8" fill="#2c2c2f"/><rect x="1024" y="520" width="8" height="8" fill="#343635"/><rect x="1032" y="520" width="8" height="8" fill="#343332"/><rect x="1040" y="520" width="8" height="8" fill="#262928"/><rect x="1048" y="520" width="8" height="8" fill="#363636"/><rect x="1056" y="520" width="8" height="8" fill="#2e3032"/><rect x="1064" y="520" width="8" height="8" fill="#303030"/><rect x="1072" y="520" width="8" height="8" fill="#2a2a28"/><rect x="992" y="536" width="8" height="8" fill="#202322"/><rect x="1000" y="536" width="8" height="8" fill="#283238"/><rect x="1008" y="536" width="8" height="8" fill="#1e1e1e"/><rect x="992" y="544" width="8" height="8" fill="#364248"/><rect x="1000" y="544" width="8" height="8" fill="#6a9ac0"/><rect x="1008" y="544" width="8" height="8" fill="#2e2e2e"/><rect x="1016" y="544" width="8" height="8" fill="#55545c"/><rect x="1024" y="544" width="8" height="8" fill="#5c6262"/><rect x="1032" y="544" width="8" height="8" fill="#544a48"/><rect x="1040" y="544" width="8" height="8" fill="#4e4e4c"/><rect x="1048" y="544" width="8" height="8" fill="#2e2a27"/><rect x="992" y="552" width="8" height="8" fill="#2a2e36"/><rect x="1000" y="552" width="8" height="8" fill="#70709c"/><rect x="1008" y="552" width="8" height="8" fill="#222222"/><rect x="1016" y="552" width="8" height="8" fill="#262729"/><rect x="1024" y="552" width="8" height="8" fill="#383a39"/><rect x="1032" y="552" width="8" height="8" fill="#343030"/><rect x="1040" y="552" width="8" height="8" fill="#323433"/><rect x="1048" y="552" width="8" height="8" fill="#262422"/><rect x="992" y="576" width="8" height="8" fill="#363c3a"/><rect x="1000" y="576" width="8" height="8" fill="#747474"/><rect x="1008" y="576" width="8" height="8" fill="#222222"/><rect x="1016" y="576" width="8" height="8" fill="#42464c"/><rect x="1024" y="576" width="8" height="8" fill="#45423f"/><rect x="1032" y="576" width="8" height="8" fill="#444446"/><rect x="1040" y="576" width="8" height="8" fill="#3e3c44"/><rect x="1048" y="576" width="8" height="8" fill="#666560"/><rect x="1056" y="576" width="8" height="8" fill="#4c4c4e"/><rect x="1064" y="576" width="8" height="8" fill="#4c4c42"/><rect x="1072" y="576" width="8" height="8" fill="#5a5a5c"/><rect x="1080" y="576" width="8" height="8" fill="#484848"/><rect x="1088" y="576" width="8" height="8" fill="#32312e"/><rect x="992" y="584" width="8" height="8" fill="#2a2a2a"/><rect x="1000" y="584" width="8" height="8" fill="#363636"/><rect x="1008" y="584" width="8" height="8" fill="#212121"/><rect x="1016" y="584" width="8" height="8" fill="#2e3034"/><rect x="1024" y="584" width="8" height="8" fill="#32312e"/><rect x="1032" y="584" width="8" height="8" fill="#323433"/><rect x="1040" y="584" width="8" height="8" fill="#242224"/><rect x="1048" y="584" width="16" height="8" fill="#323232"/><rect x="1064" y="584" width="8" height="8" fill="#2c2b28"/><rect x="1072" y="584" width="8" height="8" fill="#323436"/><rect x="1080" y="584" width="8" height="8" fill="#2e2e2e"/><rect x="1088" y="584" width="8" height="8" fill="#282724"/><rect x="968" y="608" width="8" height="8" fill="#1a1a1a"/><rect x="976" y="608" width="112" height="8" fill="#1d1d1d"/><rect x="1088" y="608" width="8" height="8" fill="#1a1a1a"/><rect x="992" y="632" width="8" height="8" fill="#2e2a20"/><rect x="1000" y="632" width="8" height="8" fill="#524a32"/><rect x="1008" y="632" width="8" height="8" fill="#1e1d1a"/><rect x="968" y="640" width="8" height="8" fill="#1c1c1c"/><rect x="976" y="640" width="8" height="8" fill="#2a2a2a"/><rect x="992" y="640" width="8" height="8" fill="#7a6c44"/><rect x="1000" y="640" width="8" height="8" fill="#fcd484"/><rect x="1008" y="640" width="8" height="8" fill="#3e2c20"/><rect x="1016" y="640" width="8" height="8" fill="#464646"/><rect x="1024" y="640" width="8" height="8" fill="#4c4e52"/><rect x="1032" y="640" width="8" height="8" fill="#4c4b48"/><rect x="1040" y="640" width="8" height="8" fill="#58595e"/><rect x="1048" y="640" width="8" height="8" fill="#4c4b46"/><rect x="1056" y="640" width="8" height="8" fill="#3c4244"/><rect x="1064" y="640" width="8" height="8" fill="#4a4a4c"/><rect x="1072" y="640" width="8" height="8" fill="#50463e"/><rect x="1080" y="640" width="8" height="8" fill="#3e3e44"/><rect x="1088" y="640" width="8" height="8" fill="#565048"/><rect x="1096" y="640" width="8" height="8" fill="#3a3b40"/><rect x="976" y="648" width="8" height="8" fill="#1f1f1f"/><rect x="992" y="648" width="8" height="8" fill="#5a4e30"/><rect x="1000" y="648" width="8" height="8" fill="#b86c3c"/><rect x="1008" y="648" width="8" height="8" fill="#4c2e20"/><rect x="1016" y="648" width="8" height="8" fill="#303030"/><rect x="1024" y="648" width="8" height="8" fill="#2e2f31"/><rect x="1032" y="648" width="8" height="8" fill="#333230"/><rect x="1040" y="648" width="8" height="8" fill="#2e2e2e"/><rect x="1048" y="648" width="8" height="8" fill="#2e3032"/><rect x="1056" y="648" width="8" height="8" fill="#242524"/><rect x="1064" y="648" width="8" height="8" fill="#323433"/><rect x="1072" y="648" width="8" height="8" fill="#322e2c"/><rect x="1080" y="648" width="8" height="8" fill="#2e2f31"/><rect x="1088" y="648" width="8" height="8" fill="#30302e"/><rect x="1096" y="648" width="8" height="8" fill="#222222"/><rect x="992" y="664" width="8" height="8" fill="#1a2224"/><rect x="1000" y="664" width="8" height="8" fill="#1b2826"/><rect x="1008" y="664" width="8" height="8" fill="#1a1e1f"/><rect x="968" y="672" width="8" height="8" fill="#2e2e2e"/><rect x="976" y="672" width="8" height="8" fill="#3e3e3e"/><rect x="992" y="672" width="8" height="8" fill="#267c90"/><rect x="1000" y="672" width="8" height="8" fill="#27a9d8"/><rect x="1008" y="672" width="8" height="8" fill="#1c485e"/><rect x="1016" y="672" width="8" height="8" fill="#636870"/><rect x="1024" y="672" width="8" height="8" fill="#5e5450"/><rect x="1032" y="672" width="8" height="8" fill="#3a3a3a"/><rect x="1040" y="672" width="8" height="8" fill="#66666c"/><rect x="1048" y="672" width="8" height="8" fill="#46433c"/><rect x="992" y="680" width="8" height="8" fill="#1c3c4c"/><rect x="1000" y="680" width="8" height="8" fill="#305a74"/><rect x="1008" y="680" width="8" height="8" fill="#16242e"/><rect x="1016" y="680" width="8" height="8" fill="#2a2b2d"/><rect x="1024" y="680" width="8" height="8" fill="#2e2a2a"/><rect x="1032" y="680" width="8" height="8" fill="#2c2c2c"/><rect x="1040" y="680" width="8" height="8" fill="#222222"/><rect x="1048" y="680" width="8" height="8" fill="#323232"/><rect x="1000" y="696" width="8" height="8" fill="#2a2418"/><rect x="1008" y="696" width="8" height="8" fill="#211f18"/><rect x="976" y="704" width="8" height="8" fill="#1c1c1c"/><rect x="984" y="704" width="8" height="8" fill="#2a2a2a"/><rect x="1000" y="704" width="8" height="8" fill="#ae9048"/><rect x="1008" y="704" width="8" height="8" fill="#ecc458"/><rect x="1016" y="704" width="8" height="8" fill="#64542c"/><rect x="1024" y="704" width="8" height="8" fill="#44454b"/><rect x="1032" y="704" width="8" height="8" fill="#56504a"/><rect x="1040" y="704" width="8" height="8" fill="#404146"/><rect x="1048" y="704" width="8" height="8" fill="#62605c"/><rect x="1056" y="704" width="8" height="8" fill="#363c3e"/><rect x="1064" y="704" width="8" height="8" fill="#4a4644"/><rect x="1072" y="704" width="8" height="8" fill="#505050"/><rect x="1080" y="704" width="8" height="8" fill="#4a4944"/><rect x="1088" y="704" width="8" height="8" fill="#5a5860"/><rect x="1096" y="704" width="8" height="8" fill="#3c3f3e"/><rect x="984" y="712" width="8" height="8" fill="#1f1f1f"/><rect x="1000" y="712" width="8" height="8" fill="#5c6c44"/><rect x="1008" y="712" width="8" height="8" fill="#6ca450"/><rect x="1016" y="712" width="8" height="8" fill="#46462c"/><rect x="1024" y="712" width="8" height="8" fill="#333333"/><rect x="1032" y="712" width="8" height="8" fill="#323232"/><rect x="1040" y="712" width="8" height="8" fill="#323335"/><rect x="1048" y="712" width="8" height="8" fill="#353535"/><rect x="1056" y="712" width="8" height="8" fill="#262a2c"/><rect x="1064" y="712" width="8" height="8" fill="#353432"/><rect x="1072" y="712" width="8" height="8" fill="#343434"/><rect x="1080" y="712" width="8" height="8" fill="#464240"/><rect x="1088" y="712" width="8" height="8" fill="#333333"/><rect x="1096" y="712" width="8" height="8" fill="#2a2e2e"/><rect x="1000" y="728" width="8" height="8" fill="#1a2c36"/><rect x="1008" y="728" width="8" height="8" fill="#1a2226"/><rect x="976" y="736" width="8" height="8" fill="#1c1c1c"/><rect x="984" y="736" width="8" height="8" fill="#2a2a2a"/><rect x="1000" y="736" width="8" height="8" fill="#2c5468"/><rect x="1008" y="736" width="8" height="8" fill="#63788a"/><rect x="1016" y="736" width="8" height="8" fill="#222222"/><rect x="1024" y="736" width="8" height="8" fill="#565a5c"/><rect x="1032" y="736" width="8" height="8" fill="#666058"/><rect x="1040" y="736" width="8" height="8" fill="#3e3c42"/><rect x="1048" y="736" width="8" height="8" fill="#5c5c56"/><rect x="1056" y="736" width="8" height="8" fill="#34363c"/><rect x="1064" y="736" width="8" height="8" fill="#2e2a22"/><rect x="984" y="744" width="8" height="8" fill="#1f1f1f"/><rect x="1000" y="744" width="8" height="8" fill="#282828"/><rect x="1008" y="744" width="8" height="8" fill="#343434"/><rect x="1016" y="744" width="8" height="8" fill="#212121"/><rect x="1024" y="744" width="8" height="8" fill="#323436"/><rect x="1032" y="744" width="8" height="8" fill="#363636"/><rect x="1040" y="744" width="8" height="8" fill="#242224"/><rect x="1048" y="744" width="8" height="8" fill="#36383a"/><rect x="1056" y="744" width="8" height="8" fill="#2e3236"/><rect x="1064" y="744" width="8" height="8" fill="#24201c"/><rect x="976" y="768" width="8" height="8" fill="#1c1c1c"/><rect x="984" y="768" width="8" height="8" fill="#2a2a2a"/><rect x="1000" y="768" width="8" height="8" fill="#363c3a"/><rect x="1008" y="768" width="8" height="8" fill="#747474"/><rect x="1016" y="768" width="8" height="8" fill="#222222"/><rect x="1024" y="768" width="8" height="8" fill="#42464c"/><rect x="1032" y="768" width="8" height="8" fill="#45423f"/><rect x="1040" y="768" width="8" height="8" fill="#444446"/><rect x="1048" y="768" width="8" height="8" fill="#3e3c44"/><rect x="1056" y="768" width="8" height="8" fill="#666560"/><rect x="1064" y="768" width="8" height="8" fill="#4c4c4e"/><rect x="1072" y="768" width="8" height="8" fill="#4c4c42"/><rect x="1080" y="768" width="8" height="8" fill="#5a5a5c"/><rect x="1088" y="768" width="8" height="8" fill="#484848"/><rect x="1096" y="768" width="8" height="8" fill="#363532"/><rect x="984" y="776" width="8" height="8" fill="#1f1f1f"/><rect x="1000" y="776" width="8" height="8" fill="#2a2a2a"/><rect x="1008" y="776" width="8" height="8" fill="#363636"/><rect x="1016" y="776" width="8" height="8" fill="#212121"/><rect x="1024" y="776" width="8" height="8" fill="#2e3034"/><rect x="1032" y="776" width="8" height="8" fill="#32312e"/><rect x="1040" y="776" width="8" height="8" fill="#323433"/><rect x="1048" y="776" width="8" height="8" fill="#242224"/><rect x="1056" y="776" width="16" height="8" fill="#323232"/><rect x="1072" y="776" width="8" height="8" fill="#2c2b28"/><rect x="1080" y="776" width="8" height="8" fill="#323436"/><rect x="1088" y="776" width="8" height="8" fill="#2e2e2e"/><rect x="1096" y="776" width="8" height="8" fill="#2a2926"/><rect x="976" y="800" width="8" height="8" fill="#1c1c1c"/><rect x="984" y="800" width="8" height="8" fill="#2a2a2a"/><rect x="1000" y="800" width="8" height="8" fill="#363c3a"/><rect x="1008" y="800" width="8" height="8" fill="#747474"/><rect x="1016" y="800" width="8" height="8" fill="#222222"/><rect x="1024" y="800" width="8" height="8" fill="#44464c"/><rect x="1032" y="800" width="8" height="8" fill="#56504a"/><rect x="1040" y="800" width="8" height="8" fill="#3e4046"/><rect x="1048" y="800" width="8" height="8" fill="#62605c"/><rect x="1056" y="800" width="8" height="8" fill="#363c40"/><rect x="1064" y="800" width="8" height="8" fill="#665c5a"/><rect x="1072" y="800" width="8" height="8" fill="#424242"/><rect x="984" y="808" width="8" height="8" fill="#1f1f1f"/><rect x="1000" y="808" width="8" height="8" fill="#2a2a2a"/><rect x="1008" y="808" width="8" height="8" fill="#363636"/><rect x="1016" y="808" width="8" height="8" fill="#212121"/><rect x="1024" y="808" width="8" height="8" fill="#333333"/><rect x="1032" y="808" width="8" height="8" fill="#323232"/><rect x="1040" y="808" width="8" height="8" fill="#303234"/><rect x="1048" y="808" width="8" height="8" fill="#353535"/><rect x="1056" y="808" width="8" height="8" fill="#25282a"/><rect x="1064" y="808" width="8" height="8" fill="#302c2a"/><rect x="1072" y="808" width="8" height="8" fill="#333333"/><rect x="968" y="832" width="8" height="8" fill="#2e2e2e"/><rect x="976" y="832" width="8" height="8" fill="#3e3e3e"/><rect x="992" y="832" width="8" height="8" fill="#363c3a"/><rect x="1000" y="832" width="8" height="8" fill="#747474"/><rect x="1008" y="832" width="8" height="8" fill="#222222"/><rect x="1016" y="832" width="8" height="8" fill="#44464c"/><rect x="1024" y="832" width="8" height="8" fill="#56504a"/><rect x="1032" y="832" width="8" height="8" fill="#3e4046"/><rect x="1040" y="832" width="8" height="8" fill="#62605c"/><rect x="1048" y="832" width="8" height="8" fill="#363c40"/><rect x="1056" y="832" width="8" height="8" fill="#665c5a"/><rect x="1064" y="832" width="8" height="8" fill="#424242"/><rect x="992" y="840" width="8" height="8" fill="#2a2a2a"/><rect x="1000" y="840" width="8" height="8" fill="#363636"/><rect x="1008" y="840" width="8" height="8" fill="#212121"/><rect x="1016" y="840" width="8" height="8" fill="#333333"/><rect x="1024" y="840" width="8" height="8" fill="#323232"/><rect x="1032" y="840" width="8" height="8" fill="#303234"/><rect x="1040" y="840" width="8" height="8" fill="#353535"/><rect x="1048" y="840" width="8" height="8" fill="#25282a"/><rect x="1056" y="840" width="8" height="8" fill="#302c2a"/><rect x="1064" y="840" width="8" height="8" fill="#333333"/><rect x="1000" y="856" width="8" height="8" fill="#2a2418"/><rect x="1008" y="856" width="8" height="8" fill="#211f18"/><rect x="1000" y="864" width="8" height="8" fill="#ae9048"/><rect x="1008" y="864" width="8" height="8" fill="#ecc458"/><rect x="1016" y="864" width="8" height="8" fill="#64542c"/><rect x="1024" y="864" width="8" height="8" fill="#626262"/><rect x="1032" y="864" width="8" height="8" fill="#444246"/><rect x="1040" y="864" width="8" height="8" fill="#5c5c5c"/><rect x="1048" y="864" width="8" height="8" fill="#4a5054"/><rect x="1056" y="864" width="8" height="8" fill="#4c4b48"/><rect x="1064" y="864" width="8" height="8" fill="#4a4946"/><rect x="1072" y="864" width="8" height="8" fill="#626262"/><rect x="1080" y="864" width="8" height="8" fill="#4a4a4c"/><rect x="1088" y="864" width="8" height="8" fill="#565452"/><rect x="1096" y="864" width="8" height="8" fill="#222326"/><rect x="1000" y="872" width="8" height="8" fill="#5c4c2c"/><rect x="1008" y="872" width="8" height="8" fill="#907838"/><rect x="1016" y="872" width="8" height="8" fill="#423822"/><rect x="1024" y="872" width="8" height="8" fill="#2c2c2c"/><rect x="1032" y="872" width="8" height="8" fill="#222222"/><rect x="1040" y="872" width="8" height="8" fill="#343434"/><rect x="1048" y="872" width="8" height="8" fill="#2c3236"/><rect x="1056" y="872" width="8" height="8" fill="#302e30"/><rect x="1064" y="872" width="8" height="8" fill="#2e2e2e"/><rect x="1072" y="872" width="8" height="8" fill="#383838"/><rect x="1080" y="872" width="8" height="8" fill="#303030"/><rect x="1088" y="872" width="8" height="8" fill="#343432"/><rect x="1096" y="872" width="8" height="8" fill="#1a1c20"/><rect x="1000" y="888" width="8" height="8" fill="#2a2418"/><rect x="1008" y="888" width="8" height="8" fill="#211f18"/><rect x="976" y="896" width="8" height="8" fill="#1c1c1c"/><rect x="984" y="896" width="8" height="8" fill="#2a2a2a"/><rect x="1000" y="896" width="8" height="8" fill="#ae9048"/><rect x="1008" y="896" width="8" height="8" fill="#ecc458"/><rect x="1016" y="896" width="8" height="8" fill="#64542c"/><rect x="1024" y="896" width="8" height="8" fill="#626262"/><rect x="1032" y="896" width="8" height="8" fill="#3e4448"/><rect x="1040" y="896" width="8" height="8" fill="#5a5450"/><rect x="1048" y="896" width="8" height="8" fill="#44444e"/><rect x="1056" y="896" width="8" height="8" fill="#6c7272"/><rect x="1064" y="896" width="8" height="8" fill="#6a6a6a"/><rect x="1072" y="896" width="8" height="8" fill="#4e4446"/><rect x="1080" y="896" width="8" height="8" fill="#5c6464"/><rect x="1088" y="896" width="8" height="8" fill="#4e4644"/><rect x="1096" y="896" width="8" height="8" fill="#1e1c18"/><rect x="984" y="904" width="8" height="8" fill="#1f1f1f"/><rect x="1000" y="904" width="8" height="8" fill="#5c4c2c"/><rect x="1008" y="904" width="8" height="8" fill="#907838"/><rect x="1016" y="904" width="8" height="8" fill="#423822"/><rect x="1024" y="904" width="8" height="8" fill="#2c2c2c"/><rect x="1032" y="904" width="8" height="8" fill="#2c2e30"/><rect x="1040" y="904" width="8" height="8" fill="#34322e"/><rect x="1048" y="904" width="8" height="8" fill="#2e2e2e"/><rect x="1056" y="904" width="8" height="8" fill="#323635"/><rect x="1064" y="904" width="8" height="8" fill="#2c2c2c"/><rect x="1072" y="904" width="8" height="8" fill="#302e30"/><rect x="1080" y="904" width="8" height="8" fill="#363a39"/><rect x="1088" y="904" width="8" height="8" fill="#2c2c2c"/><rect x="1000" y="920" width="8" height="8" fill="#2a2418"/><rect x="1008" y="920" width="8" height="8" fill="#211f18"/><rect x="976" y="928" width="8" height="8" fill="#1c1c1c"/><rect x="984" y="928" width="8" height="8" fill="#2a2a2a"/><rect x="1000" y="928" width="8" height="8" fill="#ae9048"/><rect x="1008" y="928" width="8" height="8" fill="#ecc458"/><rect x="1016" y="928" width="8" height="8" fill="#64542c"/><rect x="1024" y="928" width="8" height="8" fill="#484848"/><rect x="1032" y="928" width="8" height="8" fill="#505a62"/><rect x="1040" y="928" width="8" height="8" fill="#524a46"/><rect x="1048" y="928" width="8" height="8" fill="#505054"/><rect x="1056" y="928" width="8" height="8" fill="#484a4a"/><rect x="1064" y="928" width="8" height="8" fill="#6c6866"/><rect x="1072" y="928" width="8" height="8" fill="#4a4a50"/><rect x="1080" y="928" width="8" height="8" fill="#464640"/><rect x="984" y="936" width="8" height="8" fill="#1f1f1f"/><rect x="1000" y="936" width="8" height="8" fill="#5c4c2c"/><rect x="1008" y="936" width="8" height="8" fill="#907838"/><rect x="1016" y="936" width="8" height="8" fill="#423822"/><rect x="1024" y="936" width="8" height="8" fill="#303030"/><rect x="1032" y="936" width="8" height="8" fill="#323436"/><rect x="1040" y="936" width="8" height="8" fill="#363432"/><rect x="1048" y="936" width="8" height="8" fill="#303234"/><rect x="1056" y="936" width="8" height="8" fill="#505252"/><rect x="1064" y="936" width="8" height="8" fill="#262020"/><rect x="1072" y="936" width="8" height="8" fill="#323436"/><rect x="1080" y="936" width="8" height="8" fill="#343430"/><rect x="1000" y="952" width="8" height="8" fill="#2a2418"/><rect x="1008" y="952" width="8" height="8" fill="#211f18"/><rect x="976" y="960" width="8" height="8" fill="#1c1c1c"/><rect x="984" y="960" width="8" height="8" fill="#2a2a2a"/><rect x="1000" y="960" width="8" height="8" fill="#ae9048"/><rect x="1008" y="960" width="8" height="8" fill="#ecc458"/><rect x="1016" y="960" width="8" height="8" fill="#64542c"/><rect x="1024" y="960" width="8" height="8" fill="#646464"/><rect x="1032" y="960" width="8" height="8" fill="#4c5256"/><rect x="1040" y="960" width="8" height="8" fill="#48484a"/><rect x="1048" y="960" width="8" height="8" fill="#5c5a58"/><rect x="1056" y="960" width="8" height="8" fill="#464646"/><rect x="1064" y="960" width="8" height="8" fill="#4a4c50"/><rect x="1072" y="960" width="8" height="8" fill="#4c4c4e"/><rect x="1080" y="960" width="8" height="8" fill="#504c4c"/><rect x="1088" y="960" width="8" height="8" fill="#56545a"/><rect x="1096" y="960" width="8" height="8" fill="#424446"/><rect x="984" y="968" width="8" height="8" fill="#1f1f1f"/><rect x="1000" y="968" width="8" height="8" fill="#5c4c2c"/><rect x="1008" y="968" width="8" height="8" fill="#907838"/><rect x="1016" y="968" width="8" height="8" fill="#423822"/><rect x="1024" y="968" width="8" height="8" fill="#303030"/><rect x="1032" y="968" width="8" height="8" fill="#2a2c32"/><rect x="1040" y="968" width="8" height="8" fill="#303030"/><rect x="1048" y="968" width="8" height="8" fill="#323232"/><rect x="1056" y="968" width="8" height="8" fill="#444444"/><rect x="1064" y="968" width="8" height="8" fill="#2c2a2e"/><rect x="1072" y="968" width="8" height="8" fill="#2c302e"/><rect x="1080" y="968" width="8" height="8" fill="#303030"/><rect x="1088" y="968" width="8" height="8" fill="#2e3032"/><rect x="1096" y="968" width="8" height="8" fill="#2c2e2c"/><rect x="1000" y="984" width="8" height="8" fill="#2a2418"/><rect x="1008" y="984" width="8" height="8" fill="#211f18"/><rect x="976" y="992" width="8" height="8" fill="#1c1c1c"/><rect x="984" y="992" width="8" height="8" fill="#2a2a2a"/><rect x="1000" y="992" width="8" height="8" fill="#ae9048"/><rect x="1008" y="992" width="8" height="8" fill="#ecc458"/><rect x="1016" y="992" width="8" height="8" fill="#64542c"/><rect x="1024" y="992" width="8" height="8" fill="#50555a"/><rect x="1032" y="992" width="8" height="8" fill="#524c48"/><rect x="1040" y="992" width="8" height="8" fill="#424348"/><rect x="1048" y="992" width="8" height="8" fill="#505856"/><rect x="1056" y="992" width="8" height="8" fill="#726e6c"/><rect x="1064" y="992" width="8" height="8" fill="#463c3a"/><rect x="1072" y="992" width="8" height="8" fill="#5a5c60"/><rect x="1080" y="992" width="8" height="8" fill="#505056"/><rect x="1088" y="992" width="8" height="8" fill="#62665e"/><rect x="1096" y="992" width="8" height="8" fill="#342e2c"/><rect x="984" y="1000" width="8" height="8" fill="#1f1f1f"/><rect x="1000" y="1000" width="8" height="8" fill="#5c4c2c"/><rect x="1008" y="1000" width="8" height="8" fill="#907838"/><rect x="1016" y="1000" width="8" height="8" fill="#423822"/><rect x="1024" y="1000" width="8" height="8" fill="#34383c"/><rect x="1032" y="1000" width="8" height="8" fill="#3c3230"/><rect x="1040" y="1000" width="8" height="8" fill="#484848"/><rect x="1048" y="1000" width="8" height="8" fill="#303332"/><rect x="1056" y="1000" width="8" height="8" fill="#343432"/><rect x="1064" y="1000" width="8" height="8" fill="#323030"/><rect x="1072" y="1000" width="8" height="8" fill="#2c2e32"/><rect x="1080" y="1000" width="8" height="8" fill="#303030"/><rect x="1088" y="1000" width="8" height="8" fill="#343532"/><rect x="1096" y="1000" width="8" height="8" fill="#242528"/><rect x="1000" y="1016" width="8" height="8" fill="#2a2418"/><rect x="1008" y="1016" width="8" height="8" fill="#211f18"/><rect x="976" y="1024" width="8" height="8" fill="#1c1c1c"/><rect x="984" y="1024" width="8" height="8" fill="#2a2a2a"/><rect x="1000" y="1024" width="8" height="8" fill="#ae9048"/><rect x="1008" y="1024" width="8" height="8" fill="#ecc458"/><rect x="1016" y="1024" width="8" height="8" fill="#64542c"/><rect x="1024" y="1024" width="8" height="8" fill="#5c646c"/><rect x="1032" y="1024" width="8" height="8" fill="#504644"/><rect x="1040" y="1024" width="8" height="8" fill="#707070"/><rect x="1048" y="1024" width="8" height="8" fill="#646468"/><rect x="1056" y="1024" width="8" height="8" fill="#666666"/><rect x="1064" y="1024" width="8" height="8" fill="#4c4646"/><rect x="1072" y="1024" width="8" height="8" fill="#46484c"/><rect x="1080" y="1024" width="8" height="8" fill="#4c4c4c"/><rect x="1088" y="1024" width="8" height="8" fill="#4c4848"/><rect x="984" y="1032" width="8" height="8" fill="#1f1f1f"/><rect x="1000" y="1032" width="8" height="8" fill="#5c4c2c"/><rect x="1008" y="1032" width="8" height="8" fill="#907838"/><rect x="1016" y="1032" width="8" height="8" fill="#423822"/><rect x="1024" y="1032" width="8" height="8" fill="#2c3034"/><rect x="1032" y="1032" width="8" height="8" fill="#383636"/><rect x="1040" y="1032" width="8" height="8" fill="#2c2c2c"/><rect x="1048" y="1032" width="8" height="8" fill="#2e2e2e"/><rect x="1056" y="1032" width="8" height="8" fill="#34363a"/><rect x="1064" y="1032" width="8" height="8" fill="#2e2a2a"/><rect x="1072" y="1032" width="8" height="8" fill="#30363c"/><rect x="1080" y="1032" width="8" height="8" fill="#4c4a46"/><rect x="1088" y="1032" width="8" height="8" fill="#2e2e2c"/><rect x="1000" y="1048" width="8" height="8" fill="#2a2418"/><rect x="1008" y="1048" width="8" height="8" fill="#211f18"/></svg>
</body></html>
